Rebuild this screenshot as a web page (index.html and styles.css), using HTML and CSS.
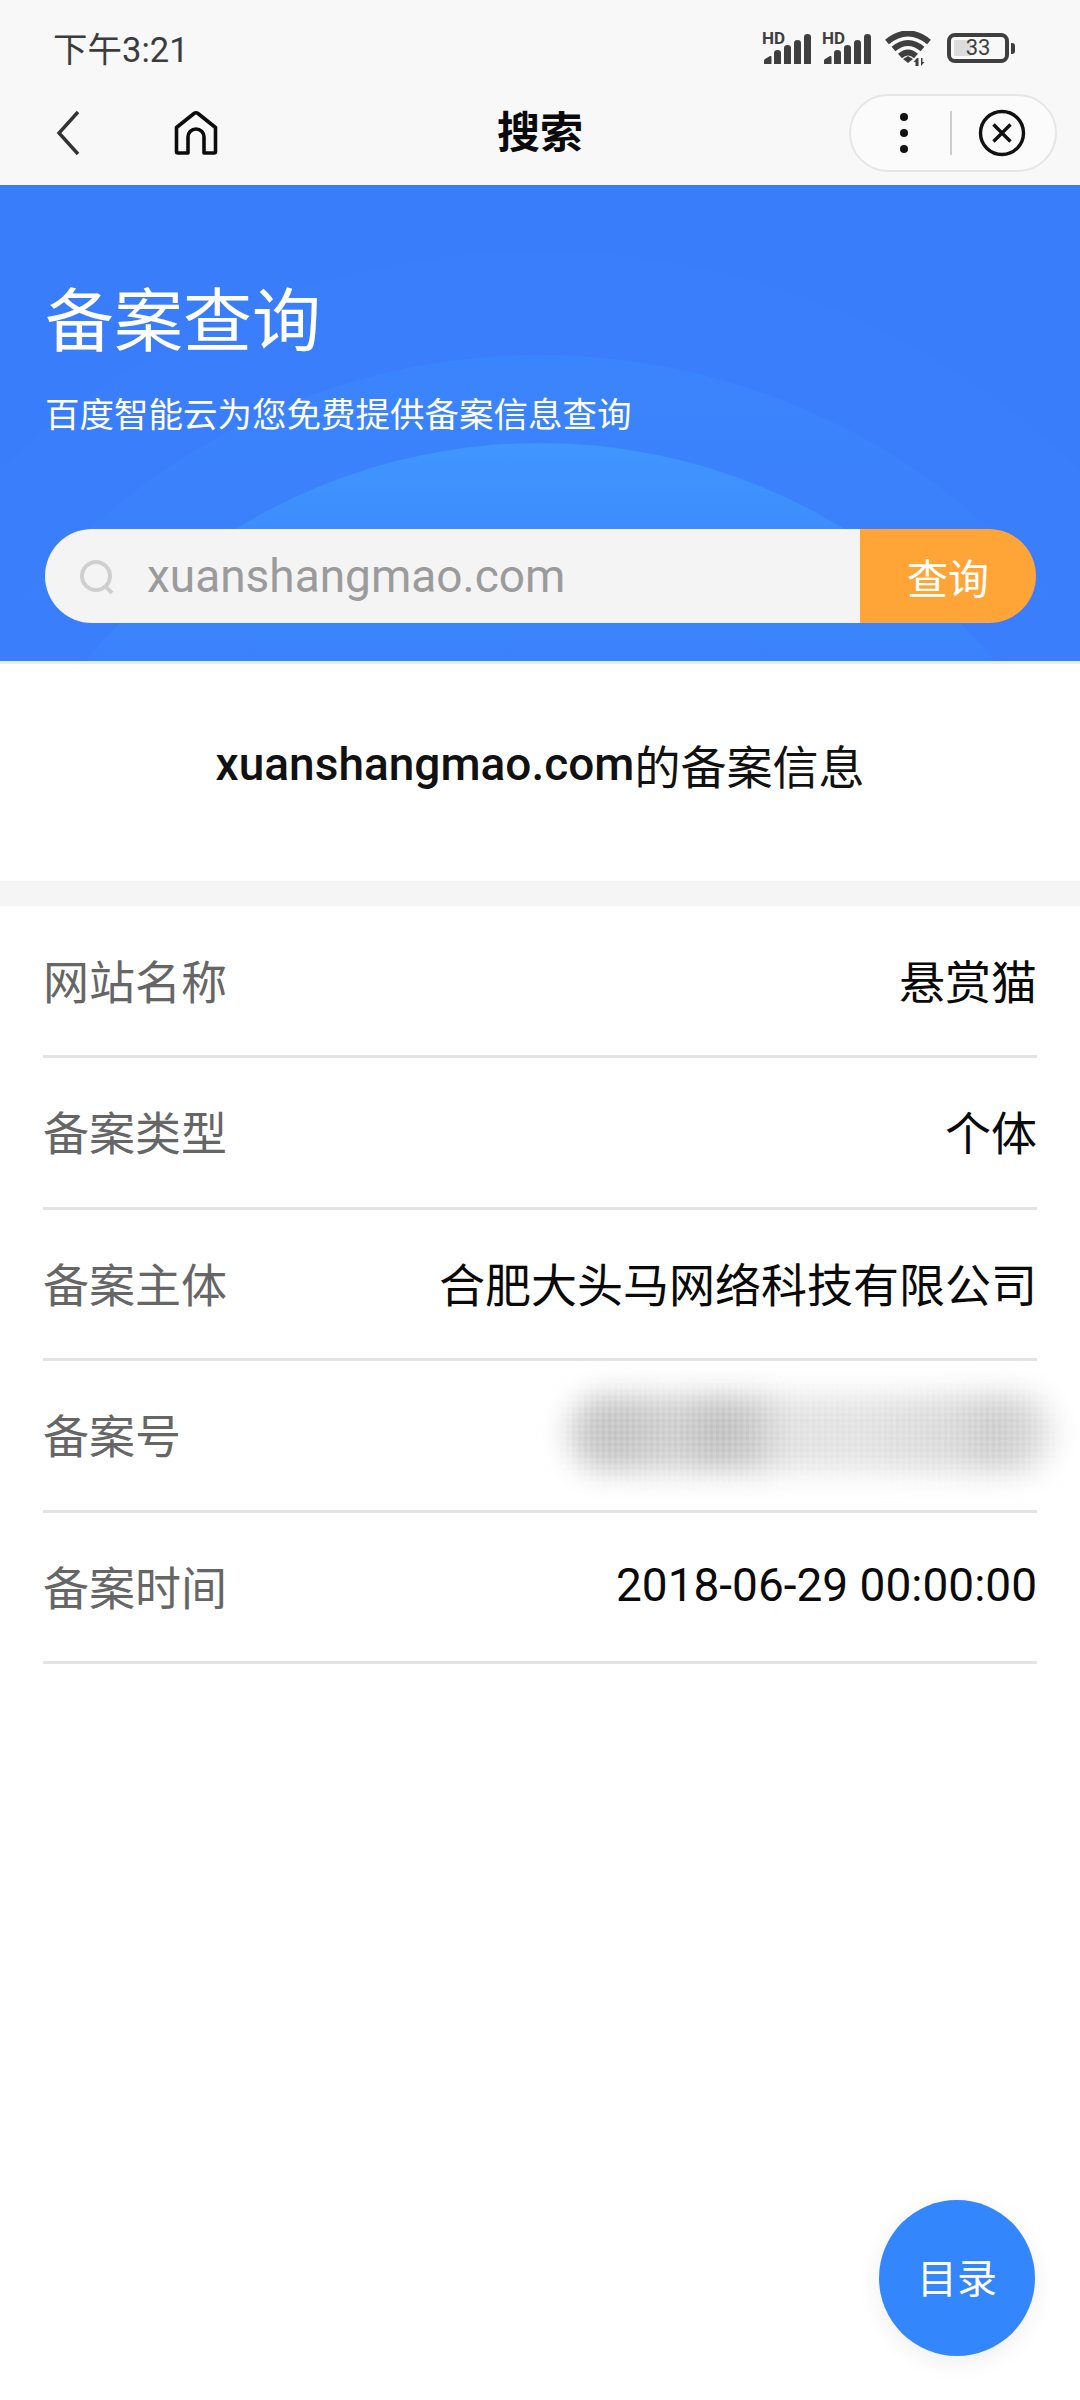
FILE: index.html
```html
<!DOCTYPE html>
<html lang="zh-CN">
<head>
<meta charset="utf-8">
<title>备案查询</title>
<link rel="stylesheet" href="styles.css">
</head>
<body>
<div class="page">
  <header class="chrome">
    <div class="status">
      <span class="time">下午3:21</span>
      <div class="status-icons">
        <svg class="sig" viewBox="0 0 50 33" width="50" height="33"><text x="0" y="12" class="hd">HD</text><path class="ic" d="M2 32v-3.500q0-1 1-1.500l5-3q1.500-.5 1.500 1v7zM12 32V21q0-3 3.500-3t3.500 3V32zM22 32V16q0-3 3.500-3t3.500 3V32zM32 32V11q0-3 3.500-3t3.500 3V32zM42 32V5q0-3 3.500-3t3.500 3V32z"/></svg>
        <svg class="sig sig2" viewBox="0 0 50 33" width="50" height="33"><text x="0" y="12" class="hd">HD</text><path class="ic" d="M2 32v-3.500q0-1 1-1.500l5-3q1.500-.5 1.500 1v7zM12 32V21q0-3 3.500-3t3.500 3V32zM22 32V16q0-3 3.500-3t3.500 3V32zM32 32V11q0-3 3.500-3t3.500 3V32zM42 32V5q0-3 3.500-3t3.500 3V32z"/></svg>
        <svg class="wifi" viewBox="0 0 48 36" width="48" height="36"><path class="wf" d="M2 11Q23-6 44 11M8.500 18Q23 6 37.500 18M15 25Q23 18 31 25"/><path class="ic" d="M18 28l5-3 5 3-5 4zM32 27l-3.500 4h2v4h3v-8zM36 27v8l3.500-4h-2v-4z"/></svg>
        <div class="batt"><span class="batt-body"><span class="batt-fill"></span><span class="batt-num">33</span></span><span class="batt-tip"></span></div>
      </div>
    </div>
    <nav class="nav">
      <div class="nav-left">
        <svg class="back" viewBox="0 0 24 46" width="24" height="46"><path d="M22 2L3 23l19 21" fill="none" stroke="#333" stroke-width="3.400"/></svg>
        <svg class="home" viewBox="0 0 44 46" width="44" height="46"><path d="M2.500 17.500L20 3.500q2-1.500 4 0L41.500 17.500V41.500q0 1.500-1.500 1.500H30V27a8 8 0 0 0-16 0V43H4q-1.500 0-1.500-1.500z" fill="none" stroke="#0c0c0c" stroke-width="3.600" stroke-linejoin="round"/></svg>
      </div>
      <h1 class="nav-title">搜索</h1>
      <div class="capsule">
        <span class="dots"><i></i><i></i><i></i></span>
        <span class="cap-line"></span>
        <svg class="close" viewBox="0 0 48 48" width="48" height="48"><circle cx="24" cy="24" r="21.500" fill="none" stroke="#111" stroke-width="3.400"/><path d="M15.500 15.500l17 17M32.500 15.500l-17 17" stroke="#111" stroke-width="3.400" fill="none"/></svg>
      </div>
    </nav>
  </header>

  <section class="hero">
    <h2 class="hero-title">备案查询</h2>
    <p class="hero-sub">百度智能云为您免费提供备案信息查询</p>
    <div class="search">
      <div class="search-field">
        <svg class="lens" viewBox="0 0 38 40" width="38" height="40"><circle cx="17" cy="20" r="14" fill="none" stroke="#cfcfcf" stroke-width="4"/><path d="M27 31l6 6" stroke="#cfcfcf" stroke-width="4" fill="none"/></svg>
        <span class="search-text">xuanshangmao.com</span>
      </div>
      <div class="search-btn">查询</div>
    </div>
  </section>

  <section class="result-head"><span class="domain">xuanshangmao.com</span>的备案信息</section>

  <section class="rows">
    <div class="row"><span class="k">网站名称</span><span class="v">悬赏猫</span></div>
    <div class="row"><span class="k">备案类型</span><span class="v">个体</span></div>
    <div class="row"><span class="k">备案主体</span><span class="v">合肥大头马网络科技有限公司</span></div>
    <div class="row"><span class="k">备案号</span><span class="mosaic"></span></div>
    <div class="row"><span class="k">备案时间</span><span class="v">2018-06-29 00:00:00</span></div>
  </section>

  <div class="fab">目录</div>
</div>
</body>
</html>
```
FILE: styles.css
```css
* { box-sizing: border-box; }
html, body { margin: 0; padding: 0; background: #fff; }
body { font-family: Roboto, "Noto Sans CJK SC", sans-serif; }
.page { position: relative; width: 1080px; height: 2400px; overflow: hidden; background: #fff; }

.chrome { height: 185px; background: #f8f8f8; }
.status { height: 80px; padding: 30px 65px 0 53px; display: flex; justify-content: space-between; align-items: flex-start; }
.time { font-size: 34.500px; line-height: 40px; color: #3c3c3c; }
.status-icons { display: flex; align-items: flex-start; }
.sig { display: block; margin-top: 2px; overflow: visible; }
.sig2 { margin-left: 10px; }
.hd { font: bold 17px Roboto, sans-serif; fill: #3f3f3f; }
.ic { fill: #3f3f3f; }
.wf { fill: none; stroke: #3f3f3f; stroke-width: 6; }
.wifi { display: block; margin-left: 13px; margin-top: 1px; }
.batt { display: flex; align-items: center; margin-left: 14px; margin-top: 3px; }
.batt-body { display: flex; align-items: center; justify-content: center; position: relative; width: 62px; height: 30px; border: 4px solid #3f3f3f; border-radius: 8px; }
.batt-fill { position: absolute; left: 3px; top: 3px; bottom: 3px; width: 17px; background: #dcdcdc; }
.batt-num { position: relative; font-size: 22px; line-height: 22px; color: #3f3f3f; }
.batt-tip { width: 4px; height: 11px; margin-left: 2px; background: #3f3f3f; border-radius: 0 3px 3px 0; }

.nav { height: 105px; display: grid; grid-template-columns: 1fr auto 1fr; align-items: center; }
.nav-left { display: flex; align-items: center; padding-left: 56px; }
.back { display: block; }
.home { display: block; margin-left: 94px; }
.nav-title { margin: 0; font-size: 43px; line-height: 60px; font-weight: 700; color: #0a0a0a; }
.capsule { justify-self: end; margin: 0 23px 0 0; width: 208px; height: 78px; display: flex; align-items: center; border: 2px solid #e6e6e6; border-radius: 39px; background: #fbfbfb; }
.dots { display: flex; flex-direction: column; gap: 8px; margin-left: 49px; }
.dots i { display: block; width: 8px; height: 8px; border-radius: 50%; background: #111; }
.cap-line { width: 2px; height: 44px; margin-left: 42px; background: #ccc; }
.close { display: block; margin-left: 26px; }

.hero {
  position: relative;
  overflow: hidden;
  height: 476px;
  padding: 100px 44px 0 45px;
  color: #fff;
  background-color: #3a7dfb;
  background-image: radial-gradient(circle 775px at 540px 840px, #3a7efb 99.800%, transparent 100%);
}
.hero::before, .hero::after { content: ""; position: absolute; left: 50%; border-radius: 50%; transform: translateX(-50%); }
.hero::before { top: 170px; width: 1340px; height: 1340px; background: linear-gradient(180deg, #3b85fc 0, #3a7efb 250px); }
.hero::after { top: 258px; width: 1164px; height: 1164px; background: linear-gradient(180deg, #4196ff 0, #3d8cfe 90px, #3a82fb 218px); }
.hero > * { position: relative; z-index: 1; }
.hero-title { margin: 0; font-size: 69px; line-height: 76px; font-weight: 400; }
.hero-sub { margin: 30px 0 0; font-size: 34.500px; line-height: 48px; }
.search { display: flex; height: 94px; margin-top: 90px; border-radius: 47px; overflow: hidden; width: 991px; }
.search-field { flex: 1; display: flex; align-items: center; background: #f4f4f4; padding-left: 34px; }
.lens { display: block; }
.search-text { margin-left: 30px; font-size: 46px; color: #9b9b9b; }
.search-btn { width: 176px; display: flex; align-items: center; justify-content: center; background: #ffa537; font-size: 41px; color: #fff; }

.result-head { height: 245px; padding: 0 0 17px; display: flex; align-items: center; justify-content: center; font-size: 46px; color: #111; border-top: 3px solid #e3edf9; border-bottom: 25px solid #f5f5f5; }
.domain { font-weight: 500; }

.rows { padding: 0.500px 43px 0; }
.row { height: 151.500px; padding-bottom: 4px; display: flex; align-items: center; justify-content: space-between; border-bottom: 3px solid #e4e4e4; font-size: 46px; }
.k { color: #666; }
.v { color: #0a0a0a; }
.mosaic { position: relative; width: 484px; height: 76px; margin-right: -16px; }
.mosaic::before { content: ""; position: absolute; inset: 0; border-radius: 34px; filter: blur(14px); background: linear-gradient(90deg, #cacaca 0%, #c0c0c0 10%, #cfcfcf 22%, #bdbdbd 30%, #c6c6c6 38%, #e0e0e0 44%, #e2e2e2 60%, #dcdcdc 70%, #d8d8d8 80%, #c8c8c8 88%, #e2e2e2 100%); }
.mosaic::after { content: ""; position: absolute; inset: -14px -6px; background-image: repeating-linear-gradient(90deg, rgba(255,255,255,.12) 0 3px, transparent 3px 6px), repeating-linear-gradient(0deg, rgba(255,255,255,.1) 0 3px, transparent 3px 6px); }

.fab { position: absolute; left: 879px; top: 2200px; width: 156px; height: 156px; padding-bottom: 4px; border-radius: 50%; display: flex; align-items: center; justify-content: center; background: #3486fd; color: #fff; font-size: 40px; box-shadow: 0 6px 24px rgba(0,0,0,.07); }
```
